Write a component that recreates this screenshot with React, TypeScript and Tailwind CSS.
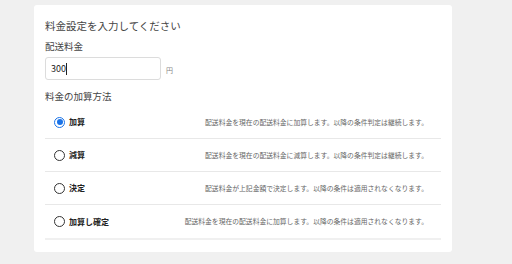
import React from "react";

const rows = [
  { label: "加算", desc: "配送料金を現在の配送料金に加算します。以降の条件判定は継続します。", checked: true },
  { label: "減算", desc: "配送料金を現在の配送料金に減算します。以降の条件判定は継続します。", checked: false },
  { label: "決定", desc: "配送料金が上記金額で決定します。以降の条件は適用されなくなります。", checked: false },
  { label: "加算し確定", desc: "配送料金を現在の配送料金に加算します。以降の条件は適用されなくなります。", checked: false },
];

export default function App() {
  return (
    <div
      className="w-[512px] h-[264px] overflow-hidden bg-[#f0f0f0] pt-[5px] pl-[34px]"
      style={{ fontFamily: '"Noto Sans CJK JP", "Noto Sans", sans-serif' }}
    >
      <div className="w-[418px] bg-white rounded-[3px] px-[11px] pt-[13px] pb-[12px]">
        <div className="text-[10.5px] leading-[16px] text-[#444]">料金設定を入力してください</div>
        <div className="mt-[5px] text-[9.5px] leading-[14px] text-[#444]">配送料金</div>
        <div className="mt-[4px] flex items-center">
          <div className="w-[116px] h-[23px] border border-[#dcdcdc] rounded-[3px] flex items-center pl-[5px] text-[9px] text-[#222]">
            300<span className="w-px h-[12px] bg-[#222]"></span>
          </div>
          <span className="ml-[5px] mt-[4px] text-[7px] text-[#888]">円</span>
        </div>
        <div className="mt-[9px] text-[9.5px] leading-[14px] text-[#444]">料金の加算方法</div>
        <div className="mt-[3px] border-b-[2px] border-[#f0f0f0]">
          {rows.map((r, i) => (
            <div
              key={i}
              className={`h-[33px] flex items-center pl-[9px] pr-[13px] ${i < rows.length - 1 ? "border-b border-[#e8e8e8]" : ""}`}
            >
              {r.checked ? (
                <span className="w-[11px] h-[11px] rounded-full border border-[#1a73e8] flex items-center justify-center">
                  <span className="w-[6px] h-[6px] rounded-full bg-[#1a73e8]"></span>
                </span>
              ) : (
                <span className="w-[11px] h-[11px] rounded-full border border-[#333]"></span>
              )}
              <span className="ml-[4px] text-[8px] font-bold text-[#222]">{r.label}</span>
              <span className="ml-auto text-[6.8px] text-[#666]">{r.desc}</span>
            </div>
          ))}
        </div>
      </div>
      <div className="mt-[12px] w-[418px] h-[20px] bg-white rounded-[3px]"></div>
    </div>
  );
}
